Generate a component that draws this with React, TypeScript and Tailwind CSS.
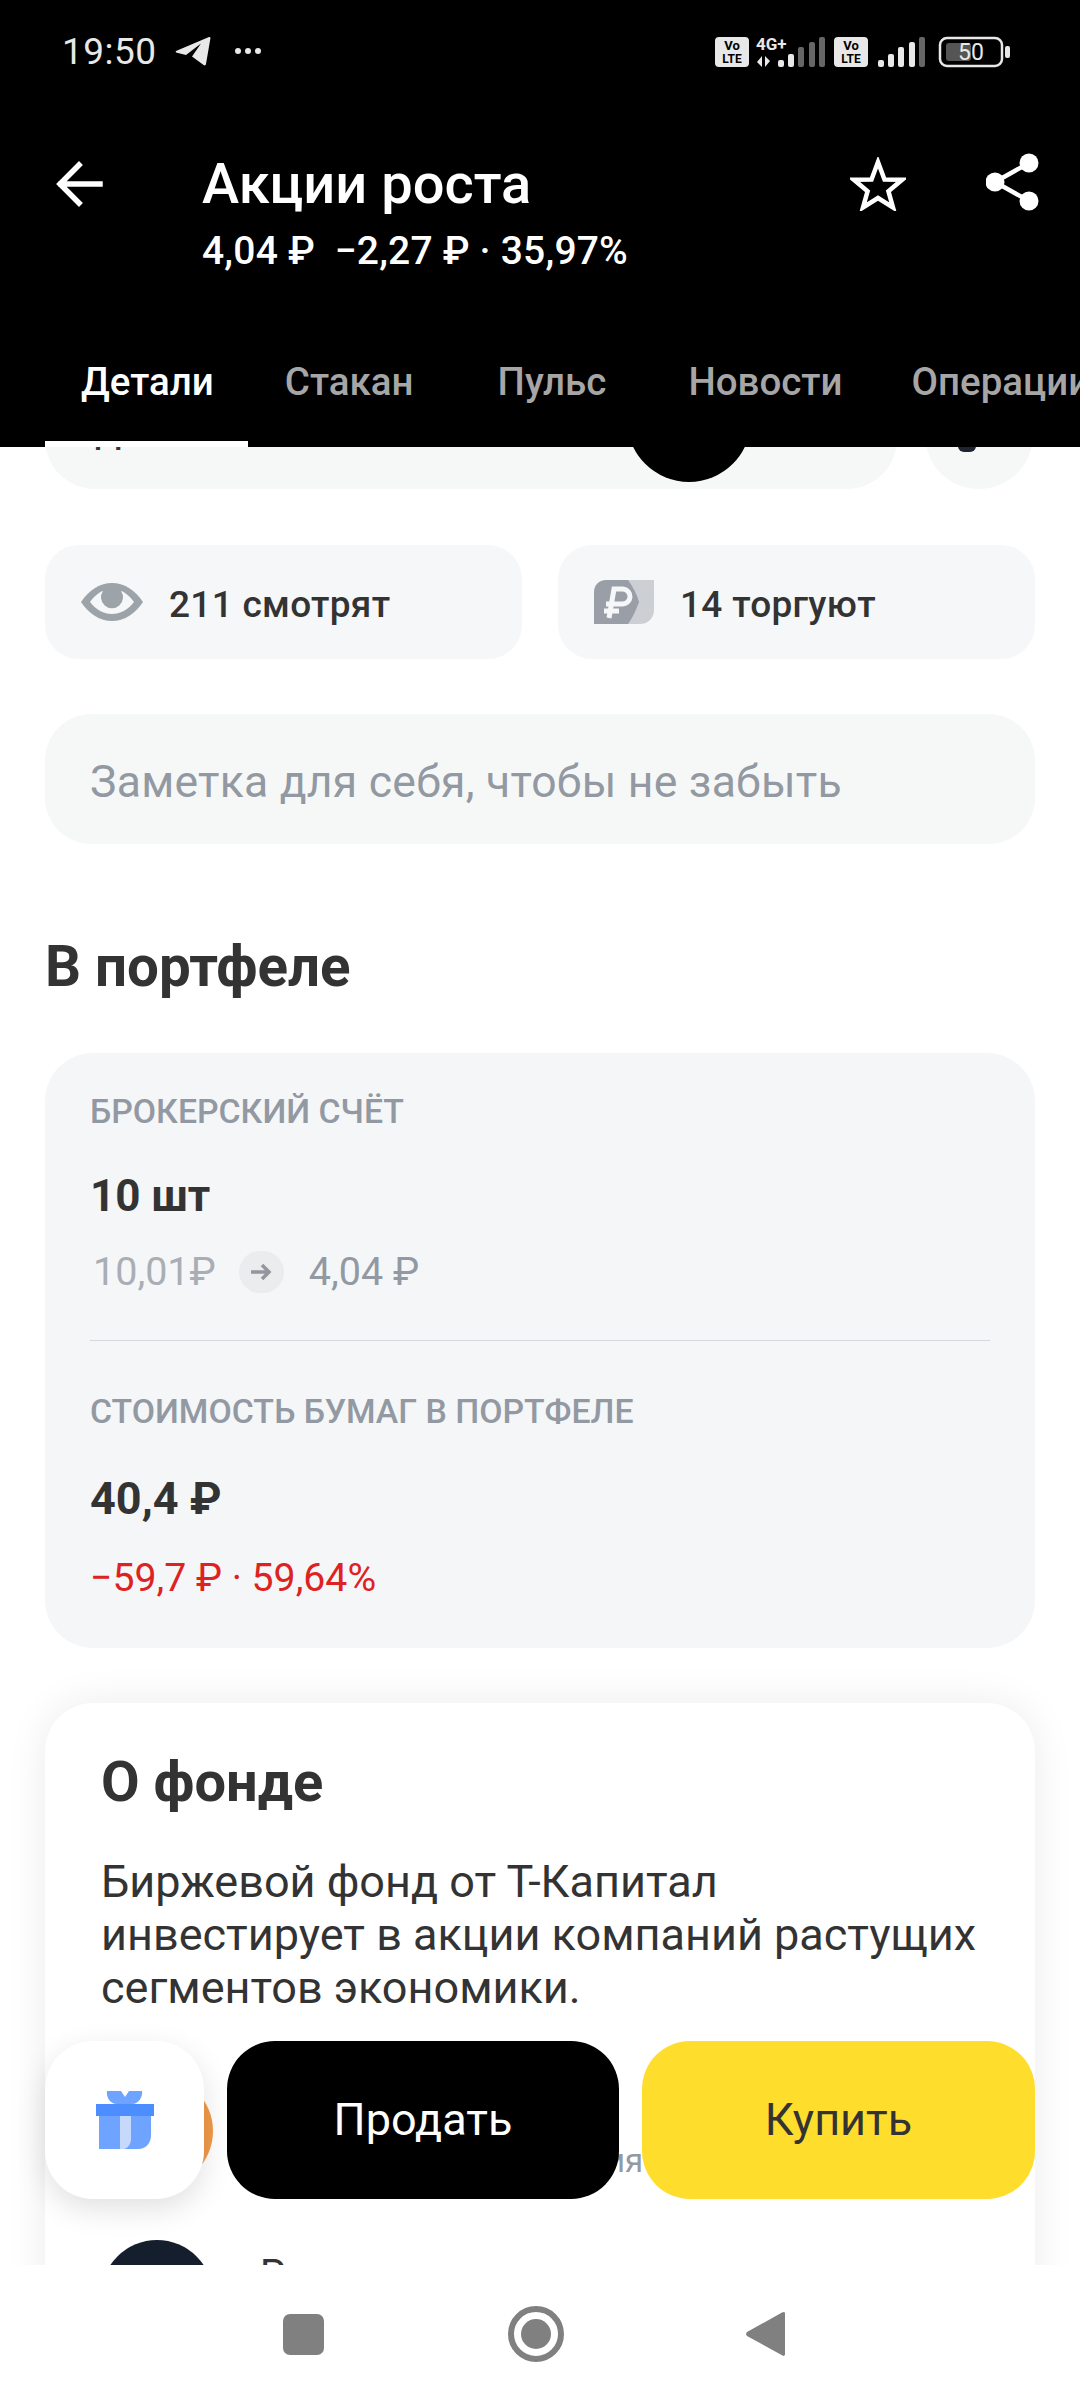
import React from 'react'

const roboto = "font-['Roboto','Noto_Sans',sans-serif]"

function StatusIcons() {
  return (
    <svg width="296" height="36" viewBox="0 0 296 36" className="block">
      <rect x="0" y="3" width="34" height="30" rx="4" fill="#e8e8e8" />
      <text x="17" y="16" textAnchor="middle" fontSize="13" fontWeight="700" fontFamily="Roboto" fill="#000">Vo</text>
      <text x="17" y="29" textAnchor="middle" fontSize="12" fontWeight="700" fontFamily="Roboto" fill="#000">LTE</text>
      <text x="41" y="16" fontSize="17" fontWeight="700" fontFamily="Roboto" fill="#e8e8e8">4G+</text>
      <path d="M47 22v11l-5-5zM50 22v11l5-6z" fill="#e8e8e8" />
      <rect x="63" y="26" width="6" height="7" rx="2" fill="#e8e8e8" />
      <rect x="73" y="20" width="6" height="13" rx="2" fill="#e8e8e8" />
      <rect x="83" y="13" width="6" height="20" rx="2" fill="#666" />
      <rect x="94" y="8" width="6" height="25" rx="2" fill="#666" />
      <rect x="104" y="3" width="6" height="30" rx="2" fill="#666" />
      <rect x="119" y="3" width="34" height="30" rx="4" fill="#e8e8e8" />
      <text x="136" y="16" textAnchor="middle" fontSize="13" fontWeight="700" fontFamily="Roboto" fill="#000">Vo</text>
      <text x="136" y="29" textAnchor="middle" fontSize="12" fontWeight="700" fontFamily="Roboto" fill="#000">LTE</text>
      <rect x="163" y="26" width="6" height="7" rx="2" fill="#e8e8e8" />
      <rect x="173" y="20" width="6" height="13" rx="2" fill="#e8e8e8" />
      <rect x="183" y="13" width="6" height="20" rx="2" fill="#e8e8e8" />
      <rect x="194" y="8" width="6" height="25" rx="2" fill="#e8e8e8" />
      <rect x="204" y="3" width="6" height="30" rx="2" fill="#666" />
      <rect x="225" y="4" width="62" height="28" rx="7" fill="none" stroke="#e8e8e8" strokeWidth="2.5" />
      <rect x="231" y="9" width="25" height="18" rx="3" fill="#555" />
      <rect x="290" y="12" width="5" height="12" rx="2" fill="#e8e8e8" />
      <text x="256" y="26" textAnchor="middle" fontSize="23" fontFamily="Roboto" fill="#e8e8e8">50</text>
    </svg>
  )
}

function TelegramIcon() {
  return (
    <svg width="36" height="32" viewBox="0 0 36 32">
      <path d="M1 15 34 1c1-.4 1.600.3 1.400 1.400L31 28c-.3 1.500-1.400 1.800-2.400 1L17 20.500l9-13-15 11.500-9-2.200C.6 16.400.4 15.400 1 15Z" fill="#e8e8e8" />
    </svg>
  )
}

function GiftIcon() {
  return (
    <svg width="58" height="58" viewBox="0 0 58 58">
      <path d="M11 0h14l4 6 4-6h13c1 5-3 13-10 13H21C14 13 10 6 11 0Z" fill="#6ea3ff" />
      <path d="M3 24h52v20c0 8-5 14-13 14H3Z" fill="#6ea3ff" />
      <path d="M24 24h11v24c0 5-3 9-7 10h-4Z" fill="#c6d9fb" />
      <rect x="0" y="13" width="58" height="12" fill="#4c8dff" />
    </svg>
  )
}

function Chip({ icon, label }: { icon: React.ReactNode; label: string }) {
  return (
    <div className="flex-1 h-[114px] rounded-[34px] bg-[#f6f7f8] flex items-center pl-[36px] gap-[26px]">
      {icon}
      <span className="mt-[5px] text-[37px] font-medium text-[#333333] tracking-[0.3px]">{label}</span>
    </div>
  )
}

export default function App() {
  return (
    <div className={`w-[1080px] h-[2400px] flex flex-col overflow-hidden bg-white ${roboto}`}>
      <header className="h-[447px] shrink-0 bg-black text-white relative">
        <div className="h-[104px] flex items-center justify-between pl-[62px] pr-[69px]">
          <div className="flex items-center gap-[18px]">
            <span className="text-[37px] text-[#e8e8e8] tracking-[0.5px]">19:50</span>
            <TelegramIcon />
            <div className="flex gap-[4px] ml-[6px] mb-[2px]">
              <div className="w-[6px] h-[6px] rounded-full bg-[#e8e8e8]" />
              <div className="w-[6px] h-[6px] rounded-full bg-[#e8e8e8]" />
              <div className="w-[6px] h-[6px] rounded-full bg-[#e8e8e8]" />
            </div>
          </div>
          <StatusIcons />
        </div>

        <div className="h-[178px] flex pl-[56px] pr-[40px] pt-[49px]">
          <svg width="48" height="46" viewBox="0 0 48 46" className="mt-[8px]" fill="none" stroke="#fff" strokeWidth="5.5" strokeLinecap="square">
            <path d="M44 23H5M23 4 4 23l19 19" />
          </svg>
          <div className="ml-[98px] flex-1">
            <div className="text-[56px] leading-[62px] font-medium">Акции роста</div>
            <div className="text-[39px] leading-[44px] mt-[14px] font-medium tracking-[0.2px]">4,04 ₽ &nbsp;−2,27 ₽ · 35,97%</div>
          </div>
          <div className="flex gap-[80px] items-start">
            <svg width="56" height="54" viewBox="0 0 56 54" className="mt-[4px]" fill="none" stroke="#fff" strokeWidth="4.5" strokeLinejoin="miter">
              <path d="M28 5l6.500 17.500L52 22.800 38.400 34.200 43 50.500 28 41l-15 9.500 4.600-16.300L4 22.800l17.500-.3Z" />
            </svg>
            <svg width="54" height="58" viewBox="0 0 54 58">
              <circle cx="43" cy="10" r="9.500" fill="#fff" />
              <circle cx="9" cy="29" r="9.500" fill="#fff" />
              <circle cx="43" cy="48" r="9.500" fill="#fff" />
              <path d="M43 10 9 29l34 19" fill="none" stroke="#fff" strokeWidth="4.500" />
            </svg>
          </div>
        </div>

        <div className="flex items-start h-[165px] pt-[71px] text-[38.5px] font-medium text-[#a6a6a6] relative">
          <span className="ml-[81px] text-white">Детали</span>
          <span className="ml-[71px]">Стакан</span>
          <span className="ml-[84px]">Пульс</span>
          <span className="ml-[82px]">Новости</span>
          <span className="ml-[69px] whitespace-nowrap">Операции</span>
          <div className="absolute left-[45px] bottom-0 w-[203px] h-[6px] bg-white" />
        </div>
      </header>

      <main className="flex-1 overflow-hidden relative min-h-0">
        <div className="px-[45px] -mt-[72px]">
          <div className="flex gap-[28px]">
            <div className="w-[852px] h-[114px] rounded-[50px] bg-[#f6f8f8] relative overflow-hidden shrink-0">
              <span className="absolute left-[50px] top-[28px] text-[44px] leading-[50px] text-[#333333]">д</span>
              <div className="absolute left-[582px] -top-[40px] w-[124px] h-[147px] rounded-[62px] bg-black" />
            </div>
            <div className="w-[108px] h-[114px] rounded-[54px] bg-[#f6f8f8] relative overflow-hidden shrink-0">
              <div className="absolute left-[33px] top-[60px] w-[18px] h-[17px] rounded-[6px] bg-[#1f2430]" />
            </div>
          </div>

          <div className="flex gap-[36px] mt-[56px]">
            <Chip
              label="211 смотрят"
              icon={
                <svg width="62" height="38" viewBox="0 0 62 38">
                  <path d="M0 19C8 7 19 0 31 0s23 7 31 19c-8 12-19 19-31 19S8 31 0 19Z" fill="#9ca3a9" />
                  <path d="M9 19c5-7 11-11 13-11a11 11 0 1 0 18 0c2 0 8 4 13 11-6 8-14 12-22 12S15 27 9 19Z" fill="#f6f7f8" />
                </svg>
              }
            />
            <Chip
              label="14 торгуют"
              icon={
                <svg width="60" height="44" viewBox="0 0 60 44">
                  <path d="M22 0h38v30c0 8-6 14-14 14H22Z" fill="#ccd0d5" />
                  <path d="M12 0h22c5 7 9 14 11 22-3 8-6 15-11 22H0V12C0 5 5 0 12 0Z" fill="#9a9fa7" />
                  <path d="M15 38 20 9h9a7.500 7.500 0 0 1-1 15H12M10 31h15" fill="none" stroke="#f6f7f8" strokeWidth="5" />
                </svg>
              }
            />
          </div>

          <div className="mt-[55px] h-[130px] rounded-[46px] bg-[#f6f8f8] flex items-center pl-[45px]">
            <span className="mt-[6px] text-[44.5px] text-[#9299a2] tracking-[0.25px]">Заметка для себя, чтобы не забыть</span>
          </div>

          <h2 className="mt-[93px] h-[59px] text-[56.5px] leading-[60px] font-bold text-[#333333]">В портфеле</h2>

          <section className="mt-[57px] h-[595px] rounded-[48px] bg-[#f5f6f8] px-[45px] pt-[39px]">
            <div className="text-[33.8px] leading-[40px] font-medium text-[#9299a2]">БРОКЕРСКИЙ СЧЁТ</div>
            <div className="mt-[39px] text-[44px] leading-[50px] font-bold text-[#333333]">10 шт</div>
            <div className="mt-[23px] h-[56px] flex items-center text-[39.5px] text-[#9299a2]">
              <span className="ml-[3px] text-[#a9aeb5]">10,01₽</span>
              <div className="ml-[23px] w-[45px] h-[42px] rounded-full bg-[#ebecee] flex items-center justify-center">
                <svg width="22" height="18" viewBox="0 0 22 18" fill="none" stroke="#92979e" strokeWidth="3.500">
                  <path d="M1 9h18M12 2l7 7-7 7" />
                </svg>
              </div>
              <span className="ml-[25px]">4,04 ₽</span>
            </div>
            <div className="mt-[40px] h-px bg-[#d5d8dc]" />
            <div className="mt-[51px] text-[33.8px] leading-[40px] font-medium text-[#9299a2]">СТОИМОСТЬ БУМАГ В ПОРТФЕЛЕ</div>
            <div className="mt-[42px] text-[45px] leading-[50px] font-bold text-[#333333]">40,4 ₽</div>
            <div className="mt-[32px] text-[39.2px] leading-[44px] text-[#dd2222]">−59,7 ₽ · 59,64%</div>
          </section>

          <section className="mt-[55px] rounded-t-[48px] bg-white shadow-[0_0_40px_rgba(0,0,0,0.08)] h-[700px] pl-[56px] pr-[40px] pt-[49px]">
            <h3 className="text-[56px] leading-[60px] font-bold text-[#333333]">О фонде</h3>
            <p className="mt-[43px] text-[45px] leading-[53px] text-[#333333] whitespace-nowrap">
              Биржевой фонд от Т-Капитал
              <br />
              инвестирует в акции компаний растущих
              <br />
              сегментов экономики.
            </p>
            <div className="mt-[61px] flex items-center gap-[47px]">
              <div className="w-[112px] h-[112px] rounded-full bg-[#f19a4a] shrink-0" />
              <div className="pt-[60px] text-[33px] text-[#9299a2] whitespace-nowrap">Управляющая компания</div>
            </div>
            <div className="mt-[53px] flex gap-[47px]">
              <div className="w-[112px] h-[112px] rounded-full bg-[#141e2d] shrink-0" />
              <div className="pt-[5px] text-[40px] text-[#333333]">Рост</div>
            </div>
          </section>
        </div>

        <div className="absolute left-[45px] right-[45px] bottom-[66px] flex gap-[23px] h-[158px]">
          <div className="w-[159px] rounded-[48px] bg-white shadow-[0_10px_30px_rgba(0,0,0,0.12)] flex items-center justify-center shrink-0">
            <GiftIcon />
          </div>
          <button className="w-[392px] rounded-[48px] bg-black text-white text-[45px] flex items-center justify-center">Продать</button>
          <button className="w-[393px] rounded-[48px] bg-[#ffdd2d] text-[#333333] text-[45px] flex items-center justify-center">Купить</button>
        </div>
      </main>

      <nav className="h-[135px] shrink-0 bg-white flex items-start pt-[42px]">
        <div className="ml-[283px] mt-[7px] w-[41px] h-[41px] rounded-[7px] bg-[#808080]" />
        <div className="ml-[184px] -mt-[1px] w-[56px] h-[56px] rounded-full border-[6px] border-[#808080] flex items-center justify-center">
          <div className="w-[30px] h-[30px] rounded-full bg-[#808080]" />
        </div>
        <svg width="40" height="46" viewBox="0 0 40 46" className="ml-[182px] mt-[4px]">
          <path d="M38 1a1.500 1.500 0 0 1 1 1.500v41a1.500 1.500 0 0 1-2.500 1L1 25a3 3 0 0 1 0-4L36 1.500Z" fill="#808080" />
        </svg>
      </nav>
    </div>
  )
}
